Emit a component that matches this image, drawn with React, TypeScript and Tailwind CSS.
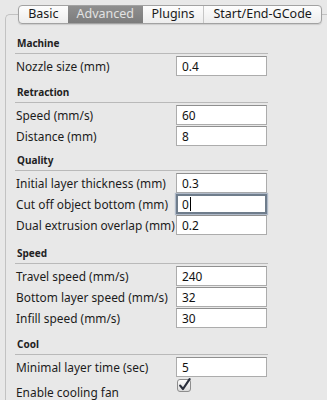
import React from "react";

type Row = { label: string; value?: string; focused?: boolean; checkbox?: boolean };
type Section = { title: string; pt: string; rows: Row[] };

const sections: Section[] = [
  { title: "Machine", pt: "pt-[8px]", rows: [{ label: "Nozzle size (mm)", value: "0.4" }] },
  {
    title: "Retraction",
    pt: "pt-[8px]",
    rows: [
      { label: "Speed (mm/s)", value: "60" },
      { label: "Distance (mm)", value: "8" },
    ],
  },
  {
    title: "Quality",
    pt: "pt-[6px]",
    rows: [
      { label: "Initial layer thickness (mm)", value: "0.3" },
      { label: "Cut off object bottom (mm)", value: "0", focused: true },
      { label: "Dual extrusion overlap (mm)", value: "0.2" },
    ],
  },
  {
    title: "Speed",
    pt: "pt-[10px]",
    rows: [
      { label: "Travel speed (mm/s)", value: "240" },
      { label: "Bottom layer speed (mm/s)", value: "32" },
      { label: "Infill speed (mm/s)", value: "30" },
    ],
  },
  {
    title: "Cool",
    pt: "pt-[8px]",
    rows: [
      { label: "Minimal layer time (sec)", value: "5" },
      { label: "Enable cooling fan", checkbox: true },
    ],
  },
];

function Field({ row }: { row: Row }) {
  if (row.checkbox) {
    return (
      <div className="flex items-start h-[21px]">
        <div className="w-[162px] shrink-0 pl-[1px] pt-[4px] leading-[20px] text-[#1c1c1c] whitespace-nowrap">{row.label}</div>
        <svg width="15" height="15" viewBox="0 0 15 15" className="shrink-0">
          <defs>
            <linearGradient id="cb" x1="0" y1="0" x2="0" y2="1">
              <stop offset="0" stopColor="#ffffff" />
              <stop offset="1" stopColor="#d9d9d9" />
            </linearGradient>
          </defs>
          <rect x="0.5" y="1.5" width="13" height="12" rx="2.5" fill="url(#cb)" stroke="#8d8d8d" />
          <path d="M3.2 7.6 L6 11 L12.6 1.2" fill="none" stroke="#2a2f3c" strokeWidth="2.2" strokeLinecap="round" strokeLinejoin="round" />
        </svg>
      </div>
    );
  }
  return (
    <div className="flex items-start h-[21px]">
      <div className="w-[161px] shrink-0 pl-[1px] h-[20px] leading-[20px] text-[#1c1c1c] whitespace-nowrap">{row.label}</div>
      {row.focused ? (
        <div className="w-[91px] shrink-0 h-[20px] bg-white border-2 border-[#6f7d8c] shadow-[0_0_1px_1px_rgba(120,140,170,0.5)] pl-[4px] leading-[16px] text-[#111] flex items-center">
          <span>{row.value}</span>
          <span className="inline-block w-[1px] h-[14px] bg-black ml-[1px]" />
        </div>
      ) : (
        <div className="w-[91px] shrink-0 h-[20px] bg-white border border-[#acacac] border-t-[#8f8f8f] pl-[5px] leading-[18px] text-[#111]">
          {row.value}
        </div>
      )}
    </div>
  );
}

export default function App() {
  const tabs = [
    { name: "Basic", w: "w-[49px]" },
    { name: "Advanced", w: "w-[75px]", active: true },
    { name: "Plugins", w: "w-[61px]" },
    { name: "Start/End-GCode", w: "w-[118px]" },
  ];
  return (
    <div className="w-[327px] h-[400px] bg-[#e8e8e8] overflow-hidden font-['Noto_Sans',sans-serif] text-[11.9px] pt-[5px]">
      <div className="relative z-10 ml-[18px] flex h-[19px] w-[304px] rounded-[4px] border border-[#a2a2a2] bg-gradient-to-b from-[#fdfdfd] to-[#ededed] shadow-[0_1px_1px_rgba(0,0,0,0.12)] overflow-hidden">
        {tabs.map((t, i) => (
          <div
            key={t.name}
            className={
              t.active
                ? `${t.w} h-full flex items-center justify-center bg-gradient-to-b from-[#8f8f8f] to-[#7c7c7c] text-[#e2e2e2] text-[12.5px]`
                : i === 3
                ? `${t.w} h-full flex items-center justify-center border-l border-[#c6c6c6] text-[#1a1a1a] text-[12.5px]`
                : `${t.w} h-full flex items-center justify-center text-[#1a1a1a] text-[12.5px]`
            }
          >
            {t.name}
          </div>
        ))}
      </div>
      <div className="-mt-[10px] ml-[5px] h-[400px] border-l border-t border-[#c2c2c2] rounded-tl-[5px] pt-[13px] pl-[9px]">
        <div className="w-[253px]">
          {sections.map((s) => (
            <div key={s.title}>
              <div className={`${s.pt} mb-[2px] border-b border-[#b9b9b9]`}>
                <div className="h-[14px] leading-[14px] pl-[2px] text-[10px] font-bold text-[#222]">{s.title}</div>
                <div className="h-[3px]" />
              </div>
              {s.rows.map((r) => (
                <Field key={r.label} row={r} />
              ))}
            </div>
          ))}
        </div>
      </div>
    </div>
  );
}
